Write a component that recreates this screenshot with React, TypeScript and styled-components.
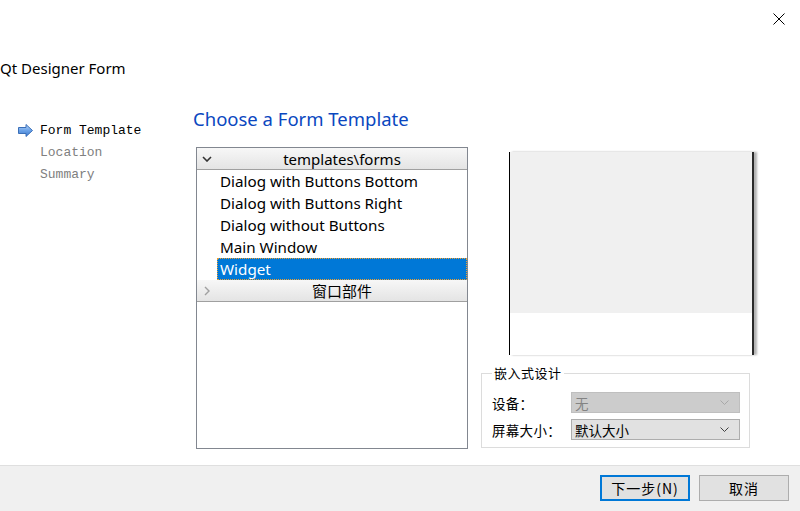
import React from "react";
import styled, { createGlobalStyle } from "styled-components";

const Global = createGlobalStyle`
  html, body { margin: 0; padding: 0; background: #ffffff; }
  body { font-family: "Noto Sans", "Noto Sans CJK SC", sans-serif; }
  * { box-sizing: border-box; }
`;

const Window = styled.div`
  width: 800px;
  height: 511px;
  display: flex;
  flex-direction: column;
  background: #ffffff;
  overflow: hidden;
`;

const TopBar = styled.div`
  height: 58px;
  display: flex;
  justify-content: flex-end;
  align-items: flex-start;
  padding: 13px 15px 0 0;
`;

const CloseButton = styled.div`
  width: 12px;
  height: 12px;
  display: flex;
`;

const FormTitle = styled.div`
  height: 20px;
  line-height: 20px;
  font-size: 15px;
  color: #000;
  font-family: "Noto Sans", sans-serif;
`;

const Body = styled.div`
  flex: 1;
  display: flex;
`;

const Sidebar = styled.div`
  width: 193px;
  padding: 41px 0 0 18px;
  display: flex;
  flex-direction: column;
`;

const Step = styled.div<{ $active?: boolean }>`
  height: 22px;
  display: flex;
  align-items: center;
  gap: 7px;
  padding-left: ${(p) => (p.$active ? "0" : "22px")};
  font-family: "Liberation Mono", "DejaVu Sans Mono", monospace;
  font-size: 13px;
  color: ${(p) => (p.$active ? "#000" : "#808080")};
`;

const Main = styled.div`
  flex: 1;
  display: flex;
  flex-direction: column;
  padding-top: 28px;
`;

const Heading = styled.div`
  height: 26px;
  line-height: 26px;
  font-size: 18.5px;
  color: #0a47bf;
  font-family: "Noto Sans", sans-serif;
`;

const ContentRow = styled.div`
  margin-top: 15px;
  display: flex;
  padding-left: 3px;
`;

const TemplateList = styled.div`
  width: 272px;
  height: 302px;
  border: 1px solid #828790;
  background: #fff;
  display: flex;
  flex-direction: column;
`;

const GroupHeader = styled.div`
  height: 22px;
  display: flex;
  align-items: center;
  background: linear-gradient(#f7f7f7, #e4e4e4);
  border-bottom: 1px solid #a0a0a0;
  font-size: 15px;
  color: #000;
`;

const HeaderIndicator = styled.div`
  width: 20px;
  display: flex;
  justify-content: center;
  align-items: center;
`;

const HeaderText = styled.div<{ $cjk?: boolean }>`
  flex: 1;
  text-align: center;
  font-family: ${(p) =>
    p.$cjk ? `"Noto Sans CJK SC", sans-serif` : `"Noto Sans", sans-serif`};
  font-size: 15px;
  line-height: 22px;
`;

const Item = styled.div<{ $selected?: boolean }>`
  height: 22px;
  line-height: 22px;
  margin-left: 20px;
  padding-left: 3px;
  font-size: 15.2px;
  font-family: "Noto Sans", sans-serif;
  color: ${(p) => (p.$selected ? "#fff" : "#000")};
  background: ${(p) => (p.$selected ? "#0078d7" : "transparent")};
  outline: ${(p) => (p.$selected ? "1px dotted #f0a030" : "none")};
  outline-offset: -1px;
`;

const RightColumn = styled.div`
  margin-left: 13px;
  display: flex;
  flex-direction: column;
`;

const Preview = styled.div`
  margin: 5px 0 0 28px;
  width: 245px;
  height: 203px;
  border-left: 1px solid #000;
  border-right: 2px solid #2a2a2a;
  box-shadow: 3px 0 2px #b4b4b4;
  display: flex;
  flex-direction: column;
`;

const PreviewSurface = styled.div`
  height: 161px;
  background: #f0f0f0;
`;

const GroupBox = styled.fieldset`
  margin: 10px 0 0 0;
  width: 269px;
  height: 83px;
  border: 1px solid #dcdcdc;
  padding: 11px 9px 0 10px;
  display: flex;
  flex-direction: column;
  gap: 6px;
  font-family: "Noto Sans CJK SC", sans-serif;
  font-size: 13px;
`;

const GroupLegend = styled.legend`
  padding: 0 2px;
  margin-left: 0;
  font-size: 13px;
  letter-spacing: 0.5px;
  line-height: 16px;
  color: #000;
`;

const FieldRow = styled.div`
  display: flex;
  align-items: center;
  height: 21px;
`;

const FieldLabel = styled.div`
  width: 79px;
  color: #000;
  font-size: 13.5px;
  letter-spacing: 0.3px;
`;

const Combo = styled.div<{ $disabled?: boolean }>`
  width: 169px;
  height: 21px;
  display: flex;
  align-items: center;
  justify-content: space-between;
  padding: 0 10px 0 3px;
  background: ${(p) => (p.$disabled ? "#cccccc" : "#e1e1e1")};
  border: 1px solid ${(p) => (p.$disabled ? "#bfbfbf" : "#adadad")};
  color: ${(p) => (p.$disabled ? "#838383" : "#000")};
  font-size: 13.5px;
`;

const Footer = styled.div`
  height: 46px;
  border-top: 1px solid #dfdfdf;
  background: #f0f0f0;
  display: flex;
  justify-content: flex-end;
  align-items: flex-start;
  padding: 9px 11px 0 0;
  gap: 9px;
`;

const Button = styled.div<{ $default?: boolean }>`
  width: 90px;
  height: 26px;
  display: flex;
  align-items: center;
  justify-content: center;
  background: #e1e1e1;
  border: ${(p) => (p.$default ? "2px solid #0078d7" : "1px solid #adadad")};
  font-family: "Noto Sans CJK SC", sans-serif;
  font-size: 14px;
  letter-spacing: 1px;
  color: #000;
`;

const ChevronDown = ({ color = "#333" }: { color?: string }) => (
  <svg width="10" height="6" viewBox="0 0 10 6">
    <path d="M1 1 L5 5 L9 1" fill="none" stroke={color} strokeWidth="1.6" />
  </svg>
);

const ChevronRight = () => (
  <svg width="6" height="10" viewBox="0 0 6 10">
    <path d="M1 1 L5 5 L1 9" fill="none" stroke="#a0a0a0" strokeWidth="1.4" />
  </svg>
);

const ComboArrow = ({ color }: { color: string }) => (
  <svg width="9" height="5" viewBox="0 0 9 5">
    <path d="M0.5 0.5 L4.5 4.5 L8.5 0.5" fill="none" stroke={color} strokeWidth="1" />
  </svg>
);

const StepArrow = () => (
  <svg width="15" height="13" viewBox="0 0 15 13">
    <defs>
      <linearGradient id="arrowFill" x1="0" y1="0" x2="0" y2="1">
        <stop offset="0" stopColor="#bcd8f8" />
        <stop offset="0.5" stopColor="#6aa2e8" />
        <stop offset="1" stopColor="#3c78cc" />
      </linearGradient>
    </defs>
    <path
      d="M0.5 3.5 H8 V0.5 L14.5 6.5 L8 12.5 V9.5 H0.5 Z"
      fill="url(#arrowFill)"
      stroke="#3a6fb8"
      strokeWidth="1"
      strokeLinejoin="round"
    />
  </svg>
);

const CloseIcon = () => (
  <svg width="12" height="12" viewBox="0 0 12 12">
    <path d="M0.5 0.5 L11.5 11.5 M11.5 0.5 L0.5 11.5" stroke="#000" strokeWidth="1" />
  </svg>
);

const templates = [
  "Dialog with Buttons Bottom",
  "Dialog with Buttons Right",
  "Dialog without Buttons",
  "Main Window",
  "Widget",
];

export default function App() {
  return (
    <>
      <Global />
      <Window>
        <TopBar>
          <CloseButton>
            <CloseIcon />
          </CloseButton>
        </TopBar>
        <FormTitle>Qt Designer Form</FormTitle>
        <Body>
          <Sidebar>
            <Step $active>
              <StepArrow />
              Form Template
            </Step>
            <Step>Location</Step>
            <Step>Summary</Step>
          </Sidebar>
          <Main>
            <Heading>Choose a Form Template</Heading>
            <ContentRow>
              <TemplateList>
                <GroupHeader>
                  <HeaderIndicator>
                    <ChevronDown />
                  </HeaderIndicator>
                  <HeaderText>templates\forms</HeaderText>
                </GroupHeader>
                {templates.map((t) => (
                  <Item key={t} $selected={t === "Widget"}>
                    {t}
                  </Item>
                ))}
                <GroupHeader>
                  <HeaderIndicator>
                    <ChevronRight />
                  </HeaderIndicator>
                  <HeaderText $cjk>窗口部件</HeaderText>
                </GroupHeader>
              </TemplateList>
              <RightColumn>
                <Preview>
                  <PreviewSurface />
                </Preview>
                <GroupBox>
                  <GroupLegend>嵌入式设计</GroupLegend>
                  <FieldRow>
                    <FieldLabel>设备：</FieldLabel>
                    <Combo $disabled>
                      <span>无</span>
                      <ComboArrow color="#a8a8a8" />
                    </Combo>
                  </FieldRow>
                  <FieldRow>
                    <FieldLabel>屏幕大小：</FieldLabel>
                    <Combo>
                      <span>默认大小</span>
                      <ComboArrow color="#404040" />
                    </Combo>
                  </FieldRow>
                </GroupBox>
              </RightColumn>
            </ContentRow>
          </Main>
        </Body>
        <Footer>
          <Button $default>下一步(N)</Button>
          <Button>取消</Button>
        </Footer>
      </Window>
    </>
  );
}
